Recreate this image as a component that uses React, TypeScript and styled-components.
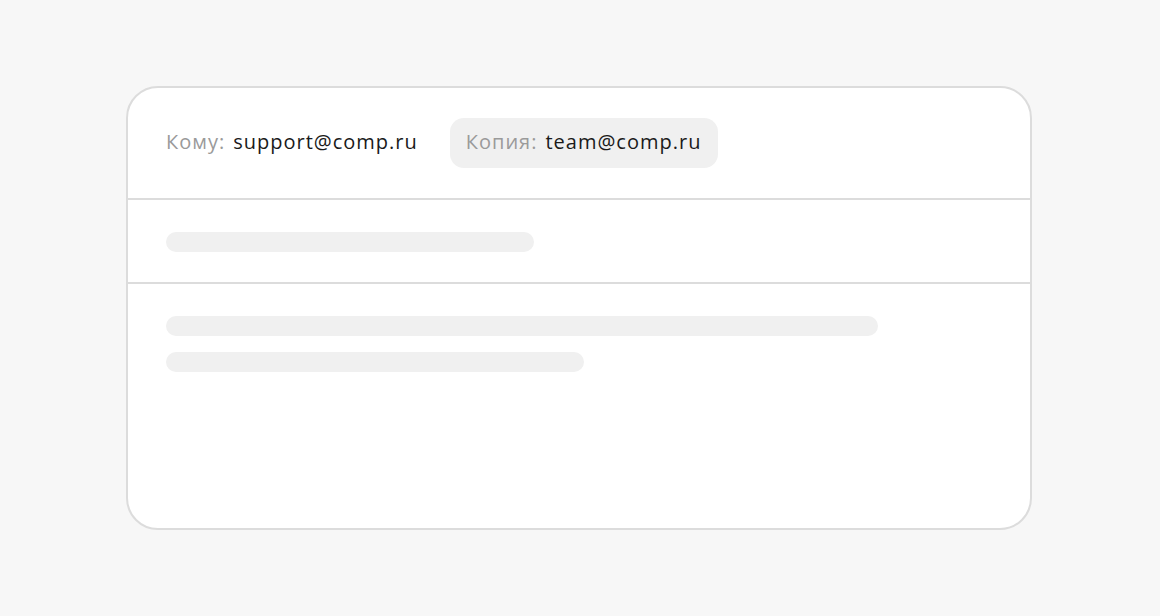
import React from "react";
import styled, { createGlobalStyle } from "styled-components";

const Global = createGlobalStyle`
  html, body { margin: 0; padding: 0; background: #f7f7f7; }
  body { font-family: "Open Sans", "Liberation Sans", sans-serif; }
`;

const Page = styled.div`
  width: 1160px;
  height: 616px;
  display: flex;
  justify-content: flex-start;
  align-items: flex-start;
  padding: 86px 0 0 126px;
  box-sizing: border-box;
`;

const Card = styled.div`
  width: 906px;
  height: 444px;
  box-sizing: border-box;
  background: #ffffff;
  border: 2px solid #dcdcdc;
  border-radius: 32px;
  display: flex;
  flex-direction: column;
  overflow: hidden;
`;

const Header = styled.div`
  height: 112px;
  flex: none;
  box-sizing: border-box;
  padding: 0 38px;
  display: flex;
  align-items: center;
  gap: 32px;
  border-bottom: 2px solid #dcdcdc;
`;

const Field = styled.div<{ $chip?: boolean }>`
  display: flex;
  align-items: center;
  gap: 8px;
  height: 50px;
  box-sizing: border-box;
  padding: ${(p) => (p.$chip ? "0 17px 3px 16px" : "0 0 3px 0")};
  background: ${(p) => (p.$chip ? "#f0f0f0" : "transparent")};
  border-radius: 14px;
  font-size: 20px;
  letter-spacing: 1px;
`;

const Label = styled.span`
  color: #9a9a9a;
`;

const Value = styled.span`
  color: #1a1a1a;
`;

const Section = styled.div<{ $grow?: boolean }>`
  padding: 32px 38px 30px;
  display: flex;
  flex-direction: column;
  gap: 16px;
  border-bottom: ${(p) => (p.$grow ? "none" : "2px solid #dcdcdc")};
  flex: ${(p) => (p.$grow ? 1 : "none")};
`;

const Bar = styled.div<{ $w: number }>`
  width: ${(p) => p.$w}px;
  height: 20px;
  border-radius: 10px;
  background: #f0f0f0;
`;

export default function App() {
  return (
    <>
      <Global />
      <Page>
        <Card>
          <Header>
            <Field>
              <Label>Кому:</Label>
              <Value>support@comp.ru</Value>
            </Field>
            <Field $chip>
              <Label>Копия:</Label>
              <Value>team@comp.ru</Value>
            </Field>
          </Header>
          <Section>
            <Bar $w={368} />
          </Section>
          <Section $grow>
            <Bar $w={712} />
            <Bar $w={418} />
          </Section>
        </Card>
      </Page>
    </>
  );
}
